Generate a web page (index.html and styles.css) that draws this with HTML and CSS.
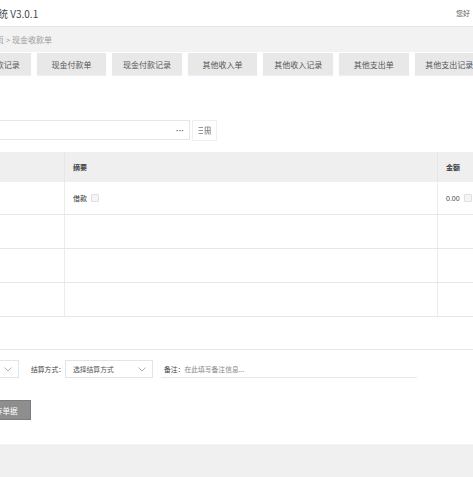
FILE: index.html
```html
<!DOCTYPE html>
<html lang="zh-CN">
<head>
<meta charset="utf-8">
<title>现金收款单</title>
<link rel="stylesheet" href="styles.css">
</head>
<body>
<div class="page">
  <header class="header">
    <div class="title">进销存管理系统 V3.0.1</div>
    <div class="greet">您好</div>
  </header>
  <div class="crumb">首页 &gt; 现金收款单</div>
  <nav class="tabs">
    <div class="tab">现金收款记录</div>
    <div class="tab">现金付款单</div>
    <div class="tab">现金付款记录</div>
    <div class="tab">其他收入单</div>
    <div class="tab">其他收入记录</div>
    <div class="tab">其他支出单</div>
    <div class="tab">其他支出记录</div>
  </nav>
  <div class="toolbar">
    <div class="search"><span class="dots">···</span></div>
    <div class="icon-btn">
      <svg width="14" height="9" viewBox="0 0 14 9" fill="none" stroke="#8a8a8a" stroke-width="0.9">
        <path d="M0.5 1.5h4.5M0.5 4.5h4.5M0.5 7.5h4.5"/>
        <path d="M7.2 8.5V1h5v7.5M7.2 4.5h5M9.7 1v3.5M8.5 8.5l1.2-4 1.2 4"/>
      </svg>
    </div>
  </div>
  <div class="table">
    <div class="row head">
      <div class="cell c1"></div>
      <div class="cell c2">摘要</div>
      <div class="cell c3">金额</div>
    </div>
    <div class="row body first">
      <div class="cell c1"></div>
      <div class="cell c2">借款 <span class="mini"></span></div>
      <div class="cell c3"><span class="num">0.00</span> <span class="mini"></span></div>
    </div>
    <div class="row body">
      <div class="cell c1"></div><div class="cell c2"></div><div class="cell c3"></div>
    </div>
    <div class="row body">
      <div class="cell c1"></div><div class="cell c2"></div><div class="cell c3"></div>
    </div>
    <div class="row body">
      <div class="cell c1"></div><div class="cell c2"></div><div class="cell c3"></div>
    </div>
  </div>
  <div class="form">
    <div class="form-row">
      <div class="select small">
        <svg class="chev" width="8" height="5" viewBox="0 0 8 5" fill="none" stroke="#999" stroke-width="0.8"><path d="M0.5 0.5L4 4l3.5-3.5"/></svg>
      </div>
      <span class="label">结算方式：</span>
      <div class="select wide">
        <span class="ph">选择结算方式</span>
        <svg class="chev" width="8" height="5" viewBox="0 0 8 5" fill="none" stroke="#999" stroke-width="0.8"><path d="M0.5 0.5L4 4l3.5-3.5"/></svg>
      </div>
      <div class="note"><span class="label">备注：</span><span class="ph light">在此填写备注信息...</span></div>
    </div>
    <div class="btn">保存单据</div>
  </div>
  <footer class="footer"></footer>
</div>
</body>
</html>
```

FILE: styles.css
```css
html, body {
  margin: 0;
  padding: 0;
  background: #fff;
}
body {
  width: 473px;
  height: 477px;
  overflow: hidden;
  font-family: "Noto Sans CJK SC", "Noto Sans", sans-serif;
  color: #333;
}
.page {
  display: flex;
  flex-direction: column;
  height: 477px;
}
.header {
  height: 26px;
  border-bottom: 1px solid #e4e4e4;
  display: flex;
  align-items: center;
  justify-content: space-between;
  padding-right: 3px;
  flex: none;
}
.title {
  margin-left: -62px;
  font-size: 10px;
  color: #444;
  white-space: nowrap;
}
.greet {
  font-size: 7px;
  color: #555;
}
.crumb {
  height: 25px;
  background: #f2f2f2;
  display: flex;
  align-items: center;
  margin-left: -12px;
  font-size: 8px;
  color: #9a9a9a;
  white-space: nowrap;
  flex: none;
}
.tabs {
  display: flex;
  gap: 6px;
  margin-top: 1px;
  margin-left: -39px;
  height: 22px;
  flex: none;
}
.tab {
  flex: 0 0 69.6px;
  height: 22px;
  background: #e8e8e8;
  box-shadow: 0 1px 1px rgba(0,0,0,0.06);
  display: flex;
  align-items: center;
  justify-content: center;
  font-size: 8px;
  color: #555;
  white-space: nowrap;
}
.toolbar {
  display: flex;
  gap: 2px;
  margin-top: 45px;
  margin-left: -10px;
  flex: none;
}
.search {
  width: 193px;
  height: 18px;
  border: 1px solid #e6e6e6;
  display: flex;
  align-items: center;
  justify-content: flex-end;
  padding-right: 5px;
}
.dots {
  font-size: 8px;
  font-weight: bold;
  color: #555;
  letter-spacing: 0;
  font-family: "Liberation Sans", sans-serif;
}
.icon-btn {
  width: 23px;
  height: 19px;
  border: 1px solid #efefef;
  display: flex;
  align-items: center;
  justify-content: center;
}
.table {
  margin-top: 11px;
  margin-left: -10px;
  width: 500px;
  flex: none;
}
.row {
  display: grid;
  grid-template-columns: 75px 373px 52px;
}
.row.head {
  height: 30px;
  background: #efefef;
}
.row.body {
  height: 33px;
  border-bottom: 1px solid #e6e6e6;
}
.row.body.first {
  height: 32px;
}
.cell {
  display: flex;
  align-items: center;
  padding-left: 8px;
  font-size: 7px;
  color: #333;
  white-space: nowrap;
}
.head .cell {
  font-weight: bold;
  color: #444;
}
.num {
  color: #444;
  font-family: "Liberation Sans", sans-serif;
}
.cell.c1, .cell.c2 {
  border-right: 1px solid #ececec;
}
.head .cell.c1, .head .cell.c2 {
  border-right-color: #e6e6e6;
}
.cell.c1 {
  padding-left: 0;
}
.mini {
  display: inline-block;
  width: 6px;
  height: 6px;
  margin-left: 4px;
  border: 1px solid #e0e0e0;
  background: #f5f5f5;
  border-radius: 1px;
}
.form {
  margin-top: 32px;
  border-top: 1px solid #e6e6e6;
  padding-top: 10px;
  flex: none;
}
.form-row {
  display: flex;
  align-items: center;
  height: 18px;
  margin-left: -10px;
}
.select {
  height: 16px;
  border: 1px solid #e4e4e4;
  display: flex;
  align-items: center;
  justify-content: space-between;
  padding: 0 6px 0 7px;
  box-sizing: content-box;
}
.select.small {
  width: 14px;
  justify-content: flex-end;
}
.select.wide {
  width: 73px;
}
.label {
  font-size: 6.8px;
  color: #444;
  margin-left: 12px;
  white-space: nowrap;
}
.ph {
  font-size: 6.8px;
  color: #555;
  white-space: nowrap;
}
.ph.light {
  color: #888;
}
.note {
  display: flex;
  align-items: center;
  width: 256px;
  height: 17px;
  margin-left: 8px;
  border-bottom: 1px solid #e8e8e8;
}
.note .label {
  margin-left: 3px;
}
.btn {
  margin-top: 22px;
  margin-left: -26px;
  width: 55px;
  height: 18px;
  background: #8e8e8e;
  border: 1px solid #7c7c7c;
  color: #fff;
  font-size: 7.5px;
  display: flex;
  align-items: center;
  justify-content: center;
  white-space: nowrap;
}
.footer {
  margin-top: 24px;
  flex: 1;
  background: #f0f0f0;
  border-top: 1px solid #f5f5f5;
}
```
